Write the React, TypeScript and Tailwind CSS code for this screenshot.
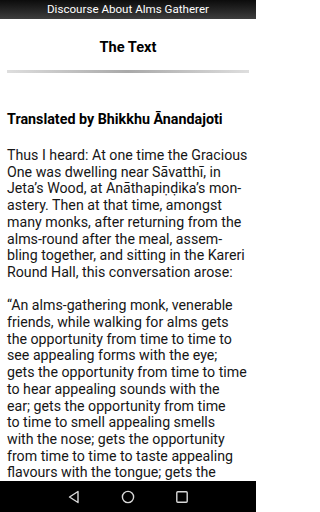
import React from "react";

const para1 = [
  "Thus I heard: At one time the Gracious",
  "One was dwelling near Sāvatthī, in",
  "Jeta’s Wood, at Anāthapiṇḍika’s mon-",
  "astery. Then at that time, amongst",
  "many monks, after returning from the",
  "alms-round after the meal, assem-",
  "bling together, and sitting in the Kareri",
  "Round Hall, this conversation arose:",
];

const para2 = [
  "“An alms-gathering monk, venerable",
  "friends, while walking for alms gets",
  "the opportunity from time to time to",
  "see appealing forms with the eye;",
  "gets the opportunity from time to time",
  "to hear appealing sounds with the",
  "ear; gets the opportunity from time",
  "to time to smell appealing smells",
  "with the nose; gets the opportunity",
  "from time to time to taste appealing",
  "flavours with the tongue; gets the",
];

export default function App() {
  return (
    <div
      className="w-[256px] h-[512px] bg-white flex flex-col overflow-hidden"
      style={{ fontFamily: "Roboto, 'Liberation Sans', sans-serif" }}
    >
      <div className="h-[19px] shrink-0 flex items-center justify-center bg-gradient-to-b from-[#0c0c0c] to-[#3e3e3e] text-white text-[11.6px] leading-none">
        Discourse About Alms Gatherer
      </div>
      <div className="flex-1 overflow-hidden flex flex-col">
        <div className="h-[51px] shrink-0 flex items-center justify-center pt-[6px] text-[14.6px] font-bold text-black">
          The Text
        </div>
        <div className="mx-[7px] h-[3px] shrink-0 bg-gradient-to-r from-[#dedede] via-[#a9a9a9] to-[#dedede]" />
        <div className="px-[7px] pt-[38px] text-black">
          <div className="text-[14.3px] font-bold leading-[17px] whitespace-nowrap">
            Translated by Bhikkhu Ānandajoti
          </div>
          <div className="mt-[19px] text-[14.2px] leading-[16.7px] text-[#161616]">
            {para1.map((l, i) => (
              <div key={i} className="whitespace-nowrap">{l}</div>
            ))}
            <div className="h-[16.7px]" />
            {para2.map((l, i) => (
              <div key={i} className="whitespace-nowrap">{l}</div>
            ))}
          </div>
        </div>
      </div>
      <div className="h-[31px] shrink-0 bg-black flex items-center justify-center">
        <div className="flex items-center gap-[38px] ml-[2px]">
          <svg width="16" height="16" viewBox="0 0 16 16" className="ml-[-2px]">
            <path d="M12 2.5 L3.5 8 L12 13.5 Z" fill="none" stroke="#d9d9d9" strokeWidth="1.4" strokeLinejoin="round" />
          </svg>
          <svg width="16" height="16" viewBox="0 0 16 16">
            <circle cx="8" cy="8" r="5.6" fill="none" stroke="#d9d9d9" strokeWidth="1.4" />
          </svg>
          <svg width="16" height="16" viewBox="0 0 16 16">
            <rect x="2.8" y="2.8" width="10.4" height="10.4" rx="1" fill="none" stroke="#d9d9d9" strokeWidth="1.4" />
          </svg>
        </div>
      </div>
    </div>
  );
}
